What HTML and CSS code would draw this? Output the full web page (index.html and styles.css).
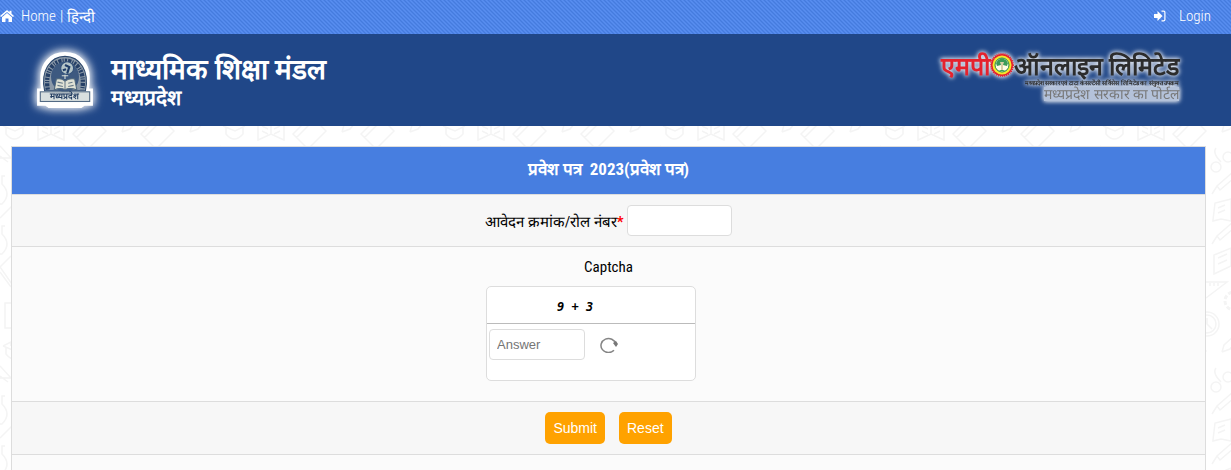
FILE: index.html
```html
<!DOCTYPE html>
<html lang="hi">
<head>
    <meta charset="UTF-8">
    <meta name="viewport" content="width=device-width, initial-scale=1.0">
    <title>माध्यमिक शिक्षा मंडल मध्यप्रदेश</title>
    <link rel="stylesheet" href="styles.css">
</head>
<body>

    <nav class="topbar">
        <div class="topbar-left">
            <svg class="home-icon" viewBox="0 0 14 12" aria-hidden="true">
                <path d="M7 0 0 6l1 1 6-5 6 5 1-1-2.500-2.200V.8h-2v1.400z"/>
                <path d="M7 3 2 7.200V12h3.500V8.500h3V12H12V7.200z"/>
            </svg>
            <a href="#">Home</a><span>|</span><a href="#">हिन्दी</a>
        </div>
        <a class="login" href="#">
            <svg class="login-icon" viewBox="0 0 12 12" aria-hidden="true">
                <path d="M0 4h3.500V1L8.500 6l-5 5V8H0z"/>
                <path d="M7.500.500h2a2 2 0 0 1 2 2v7a2 2 0 0 1-2 2h-2v-1.200h2a.800.800 0 0 0 .800-.800v-7a.800.800 0 0 0-.800-.800h-2z"/>
            </svg>
            Login
        </a>
    </nav>

    <header class="header">
        <div class="board">
            <svg class="board-logo" viewBox="0 0 54 52" role="img" aria-label="मध्यप्रदेश">
                <path d="M27 1C13 1 5 11 5 23c0 5 0 9 1 12H2v14h7l3 2h30l3-2h7V35h-4c1-3 1-7 1-12C49 11 41 1 27 1z" fill="#fff" stroke="#fff" stroke-width="2"/>
                <path d="M8 36C4 18 13 4 27 4s23 14 19 32z" fill="#8c9aa8" stroke="#2d486c"/>
                <path d="M11 35C8 18 16 8 27 8s19 10 16 27" fill="none" stroke="#253f66" stroke-width="4" stroke-dasharray="2 1 3 1 1 1"/>
                <ellipse cx="27" cy="23" rx="13" ry="14" fill="#3d5980"/>
                <ellipse cx="29" cy="15" rx="6" ry="6" fill="#b5c5c8" stroke="#314f78"/>
                <path d="M27 12l4 2-2 6M25 17l3-1" fill="none" stroke="#203e69" stroke-width="2"/>
                <path d="M27 21v4M24 22h6" stroke="#d9dfd7"/>
                <path d="M17 35l2-10q5-1 8 2 4-3 9-2l2 10q-7-2-11 0-4-2-10 0z" fill="#e0e2d5" stroke="#526a7e"/>
                <path d="M27 27v8M20 28l5 1M20 31l5 1M30 29l4-1M30 32l5-1" stroke="#687b89"/>
                <rect x="4" y="37" width="46" height="9" fill="#d8dfdf" stroke="#526a84"/>
                <text class="board-logo-text" x="27" y="44" text-anchor="middle">मध्यप्रदेश</text>
            </svg>
            <div class="board-name">
                <h1>माध्यमिक शिक्षा मंडल</h1>
                <p>मध्यप्रदेश</p>
            </div>
        </div>

        <div class="portal">
            <div class="portal-title">
                <span class="portal-mp">एमपी</span>
                <svg class="portal-seal" viewBox="0 0 24 24" aria-hidden="true">
                    <circle cx="12" cy="12" r="11" fill="#e5222d" stroke="#e5222d" stroke-width="2" stroke-dasharray="1 1"/>
                    <circle cx="12" cy="12" r="9.500" fill="#f3e72e"/>
                    <circle cx="12" cy="12" r="7" fill="#fffbe5" stroke="#248b45"/>
                    <path d="M11 12l-4 1-1-3 2-3 4-2 4 2 2 3-1 3-4-1v5l3 1H8l3-1z" fill="#3c9b59"/>
                    <path d="M10 9h4l-1 3v5h-2v-5z" fill="#d7cea5"/>
                </svg>
                <span>ऑनलाइन लिमिटेड</span>
            </div>
            <p class="portal-note">मध्यप्रदेश सरकार एवं टाटा कंसल्टेंसी सर्विसेस लिमिटेड का संयुक्त उपक्रम</p>
            <p class="portal-sub">मध्यप्रदेश सरकार का पोर्टल</p>
        </div>
    </header>

    <main class="content">
        <form class="form">
            <h2 class="form-title">प्रवेश पत्र&nbsp; 2023(प्रवेश पत्र)</h2>
            <div class="form-row roll-row">
                <label for="roll">आवेदन क्रमांक/रोल नंबर<b class="required">*</b></label>
                <input class="roll-input" id="roll" type="text">
            </div>
            <div class="form-row captcha-row">
                <div class="captcha">
                    <label class="captcha-label" for="answer">Captcha</label>
                    <div class="captcha-box">
                        <div class="captcha-code">9 + 3</div>
                        <div class="captcha-answer">
                            <input id="answer" type="text" placeholder="Answer">
                            <button class="refresh" type="button" aria-label="Refresh captcha">
                                <svg viewBox="0 0 18 16" aria-hidden="true">
                                    <path d="M14 13.300A7.500 7 0 1 1 15.800 7" fill="none" stroke="#858585" stroke-width="1.500"/>
                                    <path d="M13 6l3-2 2 3-2 3z" fill="#777"/>
                                </svg>
                            </button>
                        </div>
                    </div>
                </div>
            </div>
            <div class="form-row button-row">
                <button class="btn" type="submit">Submit</button>
                <button class="btn" type="reset">Reset</button>
            </div>
            <div class="form-row last-row"></div>
        </form>
    </main>

</body>
</html>
```
FILE: styles.css
```css
* {
    margin: 0;
    padding: 0;
    box-sizing: border-box;
}

body {
    min-height: 100vh;
    display: flex;
    flex-direction: column;
    font-family: "Roboto Condensed", "Liberation Sans Narrow", Roboto, sans-serif;
    font-size: 15px;
    color: #000;
    background: #fff;
}

a {
    color: white;
    text-decoration: none;
}

/* top bar */
.topbar {
    height: 34px;
    padding: 0 20px 2px 0;
    display: flex;
    justify-content: space-between;
    align-items: center;
    color: white;
    font-weight: 300;
    background: #4f85e8 url("data:image/svg+xml,%3Csvg xmlns='http://www.w3.org/2000/svg' width='4' height='4' shape-rendering='crispEdges' fill='%23457cde'%3E%3Cpath d='M0 0h1v1H0zM1 1h1v1H1zM2 2h1v1H2zM3 3h1v1H3z'/%3E%3Cpath fill='%23588ef0' d='M2 0h1v1H2zM3 1h1v1H3zM0 2h1v1H0zM1 3h1v1H1z'/%3E%3C/svg%3E");
}

.topbar-left {
    display: flex;
    align-items: center;
    gap: 4px;
}

.home-icon {
    width: 14px;
    height: 12px;
    margin-right: 3px;
    fill: white;
}

.login {
    display: flex;
    align-items: center;
    gap: 13px;
}

.login-icon {
    width: 12px;
    height: 12px;
    fill: white;
}

/* header */
.header {
    height: 92px;
    padding: 0 52px 0 36px;
    display: flex;
    justify-content: space-between;
    background: #204788;
}

.board {
    display: flex;
    align-items: center;
    gap: 17px;
}

.board-logo {
    width: 58px;
    height: 56px;
    overflow: visible;
    filter: drop-shadow(0 0 4px white) drop-shadow(0 0 4px #ffffff88);
}

.board-logo-text {
    font-size: 8px;
    font-weight: bold;
    fill: #203b60;
}

.board-name {
    padding-top: 4px;
    color: white;
    font-family: "Liberation Serif", serif;
    font-weight: bold;
}

.board-name h1 {
    font-size: 28px;
    line-height: 32px;
}

.board-name p {
    font-size: 21px;
    line-height: 24px;
}

.portal {
    padding-top: 18px;
    display: flex;
    flex-direction: column;
    align-items: flex-end;
    color: #2c2c2c;
    filter: drop-shadow(0 0 2px #ffffffcc) drop-shadow(0 0 2px #ffffffaa);
}

.portal-title {
    display: flex;
    align-items: center;
    height: 26px;
    font-size: 25px;
    font-weight: 600;
}

.portal-mp {
    color: #e5222d;
}

.portal-seal {
    width: 24px;
    height: 24px;
}

.portal-note {
    font-size: 6px;
    line-height: 9px;
    font-weight: bold;
}

.portal-sub {
    font-size: 14px;
    line-height: 14px;
    color: #777;
    background: #b4c2da;
}

/* form */
.content {
    flex: 1;
    display: flex;
    padding: 20px 25px 0 11px;
    background: url("data:image/svg+xml,%3Csvg xmlns='http://www.w3.org/2000/svg' width='220' height='220' fill='none' stroke='%23f4f4f4' stroke-width='1.500'%3E%3Cpath d='M3 0l12 5 10-5M6 2v6q8 10 17 0V2M38-8v22l13-6 13 6V-8M51-8V8M42 0l6 3M54 3l6-3M42 5l6 3M54 8l6-3M73 8l18-18 15 15-18 18zM76 12l14-14M122 6l2-7 9-3M122 6l8-3 5-6M141 8l18-18 15 15-18 18zM144 12l14-14M190 6l2-7 9-3M190 6l8-3 5-6'/%3E%3Cpath d='M116 22q-4 5 5 14'/%3E%3Ccircle cx='116' cy='41' r='5'/%3E%3Ccircle cx='128' cy='31' r='5'/%3E%3Cpath d='M112 68l5-8 16-14M117 60l3 4 14-12M112 118l5-8 16-14M117 110l3 4 14-12M113 94l2-17 16-4v22l-10-2-8 2zM118 82l7-3M118 87l7-3M114 148V129l17-7v18zM118 132l9-4M118 138l9-4M106 156h21l-21 16M110 157v3M114 157v3M118 157v3'/%3E%3Ccircle cx='134' cy='175' r='9' stroke-dasharray='4 2' stroke-width='3'/%3E%3Ccircle cx='107' cy='198' r='12'/%3E%3Ccircle cx='107' cy='198' r='9'/%3E%3Cpath d='M107 192v6l5 5M122 226l2-7 10-9M0 20l11 12H0M0 30l8 6M5 50H2v8q10 10 0 20H0M0 92l12-12M5 100H2v8q10 10 0 20H0M11 130L0 141l14 20M0 146l11 15M14 177H5v25h9M3 220l8-4v14M5 221v8'/%3E%3C/svg%3E") 0 0;
}

.form {
    flex: 1;
    display: flex;
    flex-direction: column;
    border: 1px solid #ddd;
    border-bottom: none;
}

.form-title {
    padding: 9px 10px 12px;
    font-size: 17px;
    line-height: 26px;
    text-align: center;
    color: white;
    background: #477ee0;
}

.form-row {
    padding: 10px;
    display: flex;
    justify-content: center;
    align-items: center;
    border-top: 1px solid #ddd;
    background: #f7f7f7;
}

.required {
    color: red;
}

input {
    height: 31px;
    padding: 0 7px;
    border: 1px solid #ddd;
    border-radius: 4px;
    background: white;
    font-family: "Liberation Sans", Arial, sans-serif;
    font-size: 13px;
}

.roll-row {
    gap: 3px;
}

.roll-input {
    width: 105px;
}

.captcha-row,
.last-row {
    background: #fbfbfb;
}

.captcha {
    width: 245px;
    padding-bottom: 10px;
}

.captcha-label {
    display: block;
    text-align: center;
    line-height: 20px;
    margin-bottom: 9px;
}

.captcha-box {
    width: 210px;
    height: 95px;
    border: 1px solid #ddd;
    border-radius: 5px;
    background: white;
}

.captcha-code {
    padding-left: 70px;
    line-height: 36px;
    height: 37px;
    padding-top: 2px;
    border-bottom: 1px solid #bbb;
    font-family: "DejaVu Sans Mono", monospace;
    font-size: 12px;
    font-style: italic;
    font-weight: bold;
}

.captcha-answer {
    padding: 5px 2px;
    display: flex;
    align-items: center;
    gap: 15px;
}

.captcha-answer input {
    width: 96px;
}

.refresh {
    width: 18px;
    height: 16px;
    border: none;
    background: none;
    cursor: pointer;
}

.refresh svg {
    display: block;
}

.button-row {
    gap: 14px;
}

.btn {
    height: 32px;
    padding: 0 8px;
    border: none;
    border-radius: 5px;
    color: white;
    background: #ffa200;
    font-family: "Liberation Sans", Arial, sans-serif;
    font-size: 14px;
    cursor: pointer;
}

.last-row {
    flex: 1;
    min-height: 15px;
    padding: 0;
}
```
